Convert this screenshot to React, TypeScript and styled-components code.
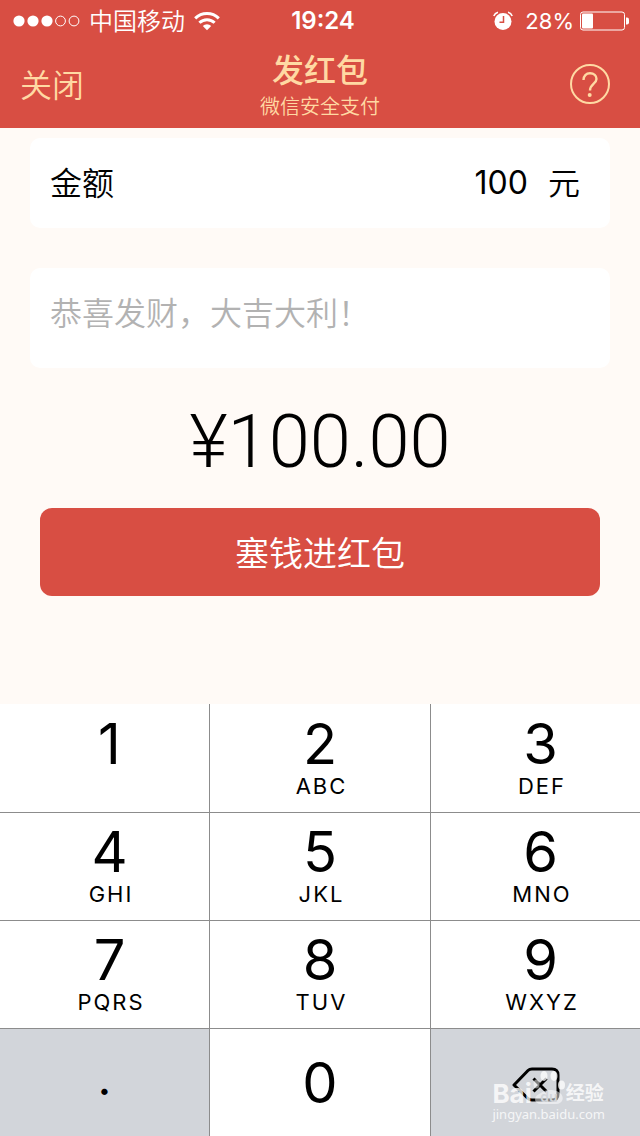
import React from "react";
import styled, { createGlobalStyle } from "styled-components";

const red = "#d84e43";
const gold = "#ffd9a3";
const latin = `Inter, "Noto Sans CJK SC", sans-serif`;

const GlobalStyle = createGlobalStyle`
  * { box-sizing: border-box; }
  body { margin: 0; background: #fffaf6; font-family: ${latin}; color: #000; }
  button, input { font-family: inherit; color: inherit; margin: 0; padding: 0; border: 0; background: none; }
  button { cursor: pointer; }
`;

const Page = styled.div`
  display: flex;
  flex-direction: column;
  min-height: 100vh;
`;

const Header = styled.header`
  background: ${red};
`;

const StatusBar = styled.div`
  display: grid;
  grid-template-columns: 1fr auto 1fr;
  align-items: center;
  height: 40px;
  padding: 1px 11px 0 13px;
  color: #fff;
  font-size: 24px;
  font-weight: 350;
  line-height: 36px;
`;

const StatusGroup = styled.div<{ $end?: boolean }>`
  display: flex;
  align-items: center;
  gap: ${(p) => (p.$end ? 6 : 9)}px;
  justify-content: ${(p) => (p.$end ? "flex-end" : "flex-start")};
`;

const Carrier = styled.span`
  padding-top: 2px;
`;

const Percent = styled.span`
  padding-left: 6px;
  font-size: 22px;
  font-weight: 400;
`;

const Clock = styled.time`
  padding-left: 4px;
  font-weight: 600;
`;

const NavBar = styled.div`
  display: grid;
  grid-template-columns: 1fr auto 1fr;
  align-items: center;
  height: 88px;
  padding: 0 20px;
  color: ${gold};
`;

const CloseButton = styled.button`
  justify-self: start;
  padding-top: 4px;
  font-size: 32px;
  font-weight: 350;
  line-height: 40px;
`;

const Heading = styled.div`
  padding-top: 6px;
  text-align: center;
`;

const Title = styled.h1`
  margin: 0;
  font-size: 32px;
  font-weight: 500;
  line-height: 40px;
`;

const Subtitle = styled.p`
  margin: 0;
  font-size: 20px;
  font-weight: 350;
  line-height: 32px;
`;

const HelpButton = styled.button`
  justify-self: end;
  display: flex;
  padding-right: 10px;
`;

const Form = styled.form`
  flex: 1;
  display: flex;
  flex-direction: column;
  padding: 10px 30px 0;
`;

const Card = styled.label<{ $tall?: boolean }>`
  display: flex;
  align-items: center;
  height: ${(p) => (p.$tall ? 100 : 90)}px;
  margin-bottom: ${(p) => (p.$tall ? 32 : 40)}px;
  padding: ${(p) => (p.$tall ? "0 30px 10px 20px" : "2px 30px 0 20px")};
  border-radius: 10px;
  background: #fff;
  font-size: 32px;
  line-height: 40px;
  font-weight: 350;
`;

const AmountInput = styled.input`
  flex: 1;
  min-width: 0;
  padding: 0 20px 4px 0;
  font-size: 32px;
  font-weight: 400;
  text-align: right;
  outline: none;
`;

const MessageInput = styled.input`
  width: 100%;
  font-size: 32px;
  font-weight: 350;
  outline: none;
  &::placeholder { color: #b2b2b2; opacity: 1; }
`;

const Total = styled.output`
  font-family: Roboto, sans-serif;
  font-size: 74px;
  font-weight: 300;
  line-height: 84px;
  text-align: center;
`;

const SubmitButton = styled.button`
  height: 88px;
  margin: 24px 10px;
  padding-bottom: 2px;
  border-radius: 12px;
  background: ${red};
  color: #fff;
  font-size: 34px;
  font-weight: 350;
`;

const Keypad = styled.div`
  position: relative;
  display: grid;
  grid-template-columns: 210fr 221fr 209fr;
  grid-auto-rows: 108px;
`;

const Key = styled.button<{ $grey?: boolean; $middle?: boolean; $single?: boolean }>`
  display: flex;
  flex-direction: column;
  align-items: center;
  justify-content: ${(p) => (p.$single ? "center" : "flex-start")};
  padding: ${(p) => (p.$single ? (p.$grey ? 4 : 0) : 6)}px 0 0 ${(p) => (p.$middle || p.$grey ? 0 : 10)}px;
  background: ${(p) => (p.$grey ? "#d2d5da" : "#fff")};
  border: 0 solid #8c8c8c;
  border-right-width: 1px;
  border-top-width: 1px;
  font-weight: 400;
  &:nth-child(3n) { border-right-width: 0; }
  &:nth-child(-n + 3) { border-top-width: 0; padding-top: 7px; }
`;

const Digit = styled.span`
  font-size: 56px;
  line-height: 66px;
`;

const Point = styled.span`
  padding-bottom: 14px;
  font-size: 48px;
  line-height: 44px;
`;

const Letters = styled.span`
  padding-left: 3px;
  font-size: 22px;
  line-height: 18px;
  letter-spacing: 2px;
`;

const Watermark = styled.div`
  position: absolute;
  right: 35px;
  bottom: 14px;
  color: rgba(255, 255, 255, 0.8);
  pointer-events: none;
`;

const WatermarkBrand = styled.div`
  display: flex;
  align-items: flex-end;
  font-size: 26px;
  font-weight: 700;
  line-height: 24px;
`;

const WatermarkName = styled.span`
  font-size: 19px;
`;

const WatermarkSite = styled.div`
  font-family: "Noto Sans", sans-serif;
  font-size: 13px;
  line-height: 16px;
`;

const SignalIcon = () => (
  <svg width="67" height="12" viewBox="0 0 67 12" aria-label="信号">
    {[6, 20, 34].map((x) => <circle key={x} cx={x} cy="6" r="5.6" fill="#fff" />)}
    {[47.5, 61].map((x) => <circle key={x} cx={x} cy="6" r="4.9" fill="none" stroke="#fff" />)}
  </svg>
);

const WifiIcon = () => (
  <svg width="26" height="20" viewBox="0 0 26 20" fill="none" stroke="#fff" strokeWidth="3">
    <path d="M1.2 7.4A16.7 16.7 0 0 1 24.8 7.4" />
    <path d="M5.4 11.8A10.7 10.7 0 0 1 20.6 11.8" />
    <path d="M13 19.2L8.8 15A5.9 5.9 0 0 1 17.2 15Z" fill="#fff" stroke="none" />
  </svg>
);

const AlarmIcon = () => (
  <svg width="20" height="20" viewBox="0 0 20 20" fill="none">
    <circle cx="10" cy="10.5" r="8.5" fill="#fff" />
    <path d="M0.8 5A6 6 0 0 1 5 1.2M19.2 5A6 6 0 0 0 15 1.2" stroke="#fff" strokeWidth="1.6" />
    <path d="M10.5 5V11.2H6.5" stroke={red} strokeWidth="1.5" />
  </svg>
);

const BatteryIcon = () => (
  <svg width="49" height="20" viewBox="0 0 49 20">
    <rect x="0.5" y="1" width="44" height="18" rx="2.5" fill="none" stroke="#fff" />
    <rect x="2" y="2.5" width="11" height="15" rx="1" fill="#fff" />
    <path d="M46 6.5H47A2 2 0 0 1 49 8.5V11.5A2 2 0 0 1 47 13.5H46Z" fill="#fff" />
  </svg>
);

const HelpIcon = () => (
  <svg width="40" height="40" viewBox="0 0 40 40" fill="none" stroke={gold} strokeWidth="2">
    <circle cx="20" cy="20" r="19" />
    <path d="M13.5 16C13.5 11.7 16.2 9.3 20 9.3C23.9 9.3 26.5 11.6 26.5 15C26.5 19.5 20 20 20 26.5" strokeWidth="2.4" />
    <circle cx="19.7" cy="31" r="2" fill={gold} stroke="none" />
  </svg>
);

const DeleteIcon = () => (
  <svg width="48" height="36" viewBox="0 0 48 36" fill="none" stroke="#000" strokeWidth="3" strokeLinejoin="round">
    <path d="M2 18L16 3.5Q17.5 2 20 2H40Q46 2 46 8V27Q46 33 40 33H20Q17.5 33 16 31.5Z" />
    <path d="M21.5 11.5L34.5 24.5M34.5 11.5L21.5 24.5" />
  </svg>
);

const PawIcon = () => (
  <svg width="34" height="36" viewBox="0 0 34 36" fill="#fff" fillOpacity="0.75">
    <ellipse cx="4.5" cy="14" rx="3" ry="4.5" fillOpacity="0.5" />
    <ellipse cx="12" cy="6" rx="3.5" ry="5" />
    <ellipse cx="22" cy="6" rx="3.5" ry="5" />
    <ellipse cx="29.5" cy="15" rx="3.5" ry="4.5" />
    <path d="M17 20C13 20 11 22 7 24C1 27 2 34 9 34C13 34 20 34 24 34C31 34 33 27 28 23C24 20 21 20 17 20Z" fillOpacity="0.5" />
    <text x="17" y="32" textAnchor="middle" fontFamily="Inter, sans-serif" fontSize="14" fontWeight="600" fill="#d2d5da" fillOpacity="1">du</text>
  </svg>
);

const keys: [string, string][] = [
  ["1", ""], ["2", "ABC"], ["3", "DEF"],
  ["4", "GHI"], ["5", "JKL"], ["6", "MNO"],
  ["7", "PQRS"], ["8", "TUV"], ["9", "WXYZ"],
];

export default function App() {
  return (
    <Page>
      <GlobalStyle />
      <Header>
        <StatusBar>
          <StatusGroup>
            <SignalIcon />
            <Carrier>中国移动</Carrier>
            <WifiIcon />
          </StatusGroup>
          <Clock>19:24</Clock>
          <StatusGroup $end>
            <AlarmIcon />
            <Percent>28%</Percent>
            <BatteryIcon />
          </StatusGroup>
        </StatusBar>
        <NavBar>
          <CloseButton type="button">关闭</CloseButton>
          <Heading>
            <Title>发红包</Title>
            <Subtitle>微信安全支付</Subtitle>
          </Heading>
          <HelpButton type="button" aria-label="帮助"><HelpIcon /></HelpButton>
        </NavBar>
      </Header>
      <Form onSubmit={(e) => e.preventDefault()}>
        <Card>
          <span>金额</span>
          <AmountInput inputMode="decimal" defaultValue="100" />
          <span>元</span>
        </Card>
        <Card $tall>
          <MessageInput aria-label="留言" placeholder="恭喜发财，大吉大利！" />
        </Card>
        <Total>¥100.00</Total>
        <SubmitButton type="submit">塞钱进红包</SubmitButton>
      </Form>
      <Keypad>
        {keys.map(([digit, letters], i) => (
          <Key key={digit} type="button" $middle={i % 3 === 1}>
            <Digit>{digit}</Digit>
            {letters && <Letters>{letters}</Letters>}
          </Key>
        ))}
        <Key type="button" $grey $single><Point>.</Point></Key>
        <Key type="button" $middle $single><Digit>0</Digit></Key>
        <Key type="button" $grey $single aria-label="删除"><DeleteIcon /></Key>
        <Watermark>
          <WatermarkBrand>
            <span>Bai</span>
            <PawIcon />
            <WatermarkName>经验</WatermarkName>
          </WatermarkBrand>
          <WatermarkSite>jingyan.baidu.com</WatermarkSite>
        </Watermark>
      </Keypad>
    </Page>
  );
}
